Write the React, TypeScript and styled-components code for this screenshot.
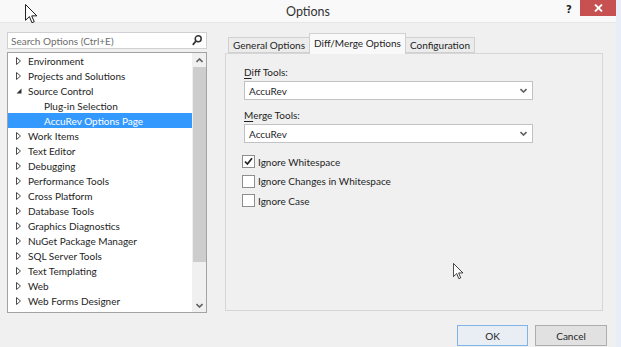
import React from "react";
import styled, { createGlobalStyle } from "styled-components";

const GlobalStyle = createGlobalStyle`
  html, body {
    margin: 0;
    padding: 0;
    background: #e8eef7;
  }
  body {
    font-family: Lato, "Noto Sans", sans-serif;
    font-size: 10px;
    color: #1e1e1e;
  }
  * {
    box-sizing: border-box;
  }
`;

const Window = styled.div`
  position: relative;
  width: 616px;
  height: 347px;
  background: #f0f0f0;
  display: flex;
  flex-direction: column;
  overflow: hidden;
`;

const TitleBar = styled.div`
  height: 23px;
  flex: none;
  background: #f9f9f9;
  border-bottom: 1px solid #e6e6e6;
  display: grid;
  grid-template-columns: 1fr auto 1fr;
  align-items: start;
`;

const Title = styled.div`
  grid-column: 2;
  font-size: 12.5px;
  line-height: 23px;
  color: #333;
`;

const TitleControls = styled.div`
  justify-self: end;
  display: flex;
  align-items: flex-start;
`;

const HelpGlyph = styled.span`
  font-family: "DejaVu Sans", sans-serif;
  font-weight: bold;
  font-size: 10px;
  line-height: 20px;
  width: 12px;
  color: #222;
  margin-right: 2px;
`;

const CloseButton = styled.div`
  width: 36px;
  height: 16px;
  background: #c75050;
  display: flex;
  align-items: center;
  justify-content: center;
`;

const Main = styled.div`
  flex: none;
  height: 290px;
  display: flex;
  padding: 9px 0 0 7px;
`;

const LeftColumn = styled.div`
  width: 200px;
  display: flex;
  flex-direction: column;
  gap: 3px;
`;

const SearchBox = styled.div`
  height: 17px;
  background: #fff;
  border: 1px solid #cfcfd4;
  display: flex;
  align-items: center;
  justify-content: space-between;
  padding: 0 4px 0 3px;
  color: #6d6d6d;
`;

const TreeBox = styled.div`
  height: 261px;
  background: #fff;
  border: 1px solid #a3a3a3;
  display: flex;
`;

const TreeList = styled.div`
  flex: 1;
  overflow: hidden;
`;

const TreeRow = styled.div<{ $level: number; $selected?: boolean }>`
  height: 15px;
  display: flex;
  align-items: center;
  padding-left: ${(p) => 8 + p.$level * 16}px;
  background: ${(p) => (p.$selected ? "#3399ff" : "transparent")};
  color: ${(p) => (p.$selected ? "#fff" : "#1e1e1e")};
  white-space: nowrap;
`;

const Expander = styled.span`
  width: 12px;
  flex: none;
  display: flex;
  align-items: center;
`;

const ScrollBar = styled.div`
  width: 14px;
  flex: none;
  background: #f0f0f0;
  display: flex;
  flex-direction: column;
`;

const ScrollArrow = styled.div`
  height: 14px;
  flex: none;
  display: flex;
  align-items: center;
  justify-content: center;
`;

const ScrollTrack = styled.div`
  flex: 1;
  padding-left: 1px;
`;

const ScrollThumb = styled.div`
  height: 195px;
  background: #cdcdcd;
`;

const RightColumn = styled.div`
  margin-left: 18px;
  padding-top: 1px;
  width: 378px;
  display: flex;
  flex-direction: column;
`;

const TabRow = styled.div`
  height: 20px;
  display: flex;
  align-items: flex-end;
  padding-left: 3px;
  position: relative;
  z-index: 1;
`;

const Tab = styled.div<{ $active?: boolean }>`
  height: ${(p) => (p.$active ? 21 : 16)}px;
  margin-bottom: ${(p) => (p.$active ? -1 : 0)}px;
  padding: ${(p) => (p.$active ? "2px 4px 0" : "0 4px")};
  margin-left: ${(p) => (p.$active ? -1 : 0)}px;
  margin-right: ${(p) => (p.$active ? -1 : 0)}px;
  border: 1px solid #d0d0d0;
  border-bottom: ${(p) => (p.$active ? "none" : "1px solid #d0d0d0")};
  background: ${(p) => (p.$active ? "#f9f9f9" : "#ececec")};
  line-height: 14px;
  white-space: nowrap;
`;

const Panel = styled.div`
  height: 258px;
  border: 1px solid #d6d6d6;
  padding: 11px 0 0 18px;
  display: flex;
  flex-direction: column;
`;

const FieldLabel = styled.div`
  line-height: 14px;
  height: 14px;
  & u {
    text-decoration-thickness: 1px;
    text-underline-offset: 2px;
  }
`;

const Select = styled.div`
  width: 289px;
  height: 19px;
  margin-top: 2px;
  margin-bottom: 8px;
  background: #fff;
  border: 1px solid #c2c2c2;
  display: flex;
  align-items: center;
  justify-content: space-between;
  padding: 0 5px 0 4px;
`;

const CheckList = styled.div`
  margin-top: 1px;
  margin-left: -2px;
  display: flex;
  flex-direction: column;
`;

const CheckRow = styled.div`
  height: 19.5px;
  display: flex;
  align-items: center;
  gap: 3px;
`;

const CheckBox = styled.span`
  width: 13px;
  height: 13px;
  border: 1px solid #8e8e8e;
  background: #fff;
  display: flex;
  align-items: center;
  justify-content: center;
`;

const Footer = styled.div`
  flex: 1;
  display: flex;
  justify-content: flex-end;
  gap: 7px;
  padding: 12px 9px 0 0;
`;

const Button = styled.div<{ $default?: boolean }>`
  width: ${(p) => (p.$default ? 71 : 72)}px;
  height: 21px;
  border: 1px solid ${(p) => (p.$default ? "#7eb4ea" : "#adadad")};
  background: ${(p) => (p.$default ? "#e8eef4" : "#e1e1e1")};
  display: flex;
  align-items: center;
  justify-content: center;
  color: #1e1e1e;
`;

const Cursor = styled.svg<{ $x: number; $y: number }>`
  position: absolute;
  left: ${(p) => p.$x}px;
  top: ${(p) => p.$y}px;
  pointer-events: none;
`;

const treeItems: { label: string; level: number; kind: "closed" | "open" | "leaf"; selected?: boolean }[] = [
  { label: "Environment", level: 0, kind: "closed" },
  { label: "Projects and Solutions", level: 0, kind: "closed" },
  { label: "Source Control", level: 0, kind: "open" },
  { label: "Plug-in Selection", level: 1, kind: "leaf" },
  { label: "AccuRev Options Page", level: 1, kind: "leaf", selected: true },
  { label: "Work Items", level: 0, kind: "closed" },
  { label: "Text Editor", level: 0, kind: "closed" },
  { label: "Debugging", level: 0, kind: "closed" },
  { label: "Performance Tools", level: 0, kind: "closed" },
  { label: "Cross Platform", level: 0, kind: "closed" },
  { label: "Database Tools", level: 0, kind: "closed" },
  { label: "Graphics Diagnostics", level: 0, kind: "closed" },
  { label: "NuGet Package Manager", level: 0, kind: "closed" },
  { label: "SQL Server Tools", level: 0, kind: "closed" },
  { label: "Text Templating", level: 0, kind: "closed" },
  { label: "Web", level: 0, kind: "closed" },
  { label: "Web Forms Designer", level: 0, kind: "closed" },
  { label: "Web Performance Test Tools", level: 0, kind: "closed" },
];

const checks = [
  { label: "Ignore Whitespace", checked: true },
  { label: "Ignore Changes in Whitespace", checked: false },
  { label: "Ignore Case", checked: false },
];

const ClosedArrow = () => (
  <svg width="5" height="8" viewBox="0 0 5 8">
    <path d="M0.5 0.5 L4.5 4 L0.5 7.5 Z" fill="none" stroke="#4a4a4a" strokeWidth="1" />
  </svg>
);

const OpenArrow = () => (
  <svg width="6" height="6" viewBox="0 0 6 6">
    <path d="M5.5 0.5 L5.5 5.5 L0.5 5.5 Z" fill="#333" />
  </svg>
);

const Chevron = ({ up }: { up?: boolean }) => (
  <svg width="7" height="5" viewBox="0 0 7 5">
    <path
      d={up ? "M0.5 4 L3.5 1 L6.5 4" : "M0.5 1 L3.5 4 L6.5 1"}
      fill="none"
      stroke="#606060"
      strokeWidth="1.6"
    />
  </svg>
);

const SearchIcon = () => (
  <svg width="10" height="11" viewBox="0 0 10 11">
    <circle cx="6.2" cy="3.8" r="3" fill="none" stroke="#333" strokeWidth="1.5" />
    <path d="M4 6 L0.8 9.8" stroke="#333" strokeWidth="1.8" />
  </svg>
);

const CheckMark = () => (
  <svg width="9" height="9" viewBox="0 0 9 9">
    <path d="M1 4.5 L3.4 7 L8 1.2" fill="none" stroke="#222" strokeWidth="1.7" />
  </svg>
);

const ArrowCursor = ({ x, y, scale }: { x: number; y: number; scale: number }) => (
  <Cursor $x={x} $y={y} width={12 * scale} height={19 * scale} viewBox="0 0 12 19">
    <path
      d="M0.5 0.5 L0.5 15.5 L4.2 12 L6.6 17.8 L8.8 16.9 L6.4 11.3 L11.3 11.3 Z"
      fill="#fff"
      stroke="#111"
      strokeWidth="0.9"
      strokeLinejoin="round"
    />
  </Cursor>
);

const App = () => {
  return (
    <>
      <GlobalStyle />
      <Window>
        <TitleBar>
          <Title>Options</Title>
          <TitleControls>
            <HelpGlyph>?</HelpGlyph>
            <CloseButton>
              <svg width="9" height="8" viewBox="0 0 9 8">
                <path d="M1 0.5 L8 7.5 M8 0.5 L1 7.5" stroke="#fff" strokeWidth="1.8" />
              </svg>
            </CloseButton>
          </TitleControls>
        </TitleBar>

        <Main>
          <LeftColumn>
            <SearchBox>
              <span>Search Options (Ctrl+E)</span>
              <SearchIcon />
            </SearchBox>
            <TreeBox>
              <TreeList>
                {treeItems.map((item) => (
                  <TreeRow key={item.label} $level={item.level} $selected={item.selected}>
                    <Expander>
                      {item.kind === "closed" && <ClosedArrow />}
                      {item.kind === "open" && <OpenArrow />}
                    </Expander>
                    {item.label}
                  </TreeRow>
                ))}
              </TreeList>
              <ScrollBar>
                <ScrollArrow>
                  <Chevron up />
                </ScrollArrow>
                <ScrollTrack>
                  <ScrollThumb />
                </ScrollTrack>
                <ScrollArrow>
                  <Chevron />
                </ScrollArrow>
              </ScrollBar>
            </TreeBox>
          </LeftColumn>

          <RightColumn>
            <TabRow>
              <Tab>General Options</Tab>
              <Tab $active>Diff/Merge Options</Tab>
              <Tab>Configuration</Tab>
            </TabRow>
            <Panel>
              <FieldLabel>
                <u>D</u>iff Tools:
              </FieldLabel>
              <Select>
                <span>AccuRev</span>
                <Chevron />
              </Select>
              <FieldLabel>
                <u>M</u>erge Tools:
              </FieldLabel>
              <Select>
                <span>AccuRev</span>
                <Chevron />
              </Select>
              <CheckList>
                {checks.map((c) => (
                  <CheckRow key={c.label}>
                    <CheckBox>{c.checked && <CheckMark />}</CheckBox>
                    {c.label}
                  </CheckRow>
                ))}
              </CheckList>
            </Panel>
          </RightColumn>
        </Main>

        <Footer>
          <Button $default>OK</Button>
          <Button>Cancel</Button>
        </Footer>

        <ArrowCursor x={25} y={4} scale={1.05} />
        <ArrowCursor x={453} y={263} scale={0.88} />
      </Window>
    </>
  );
};

export default App;
